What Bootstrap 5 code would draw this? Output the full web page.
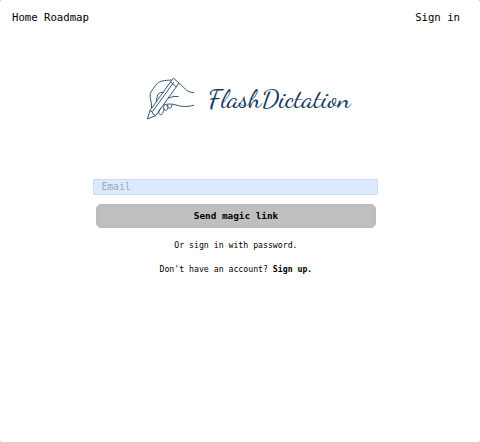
<!DOCTYPE html>
<html lang="en">
<head>
<meta charset="utf-8">
<meta name="viewport" content="width=device-width, initial-scale=1">
<title>FlashDictation</title>
<link href="https://cdn.jsdelivr.net/npm/bootstrap@5.3.0/dist/css/bootstrap.min.css" rel="stylesheet">
<style>
html { background: #b8b8b8; }
body { font-family: "DejaVu Sans Mono", monospace; font-size: 8.2px; line-height: 12px; color: #000; height: 442px; border-radius: 2px; overflow: hidden; }
.topbar { padding: 10px 20px 0 12px; height: 26px; font-size: 10.65px; line-height: 16px; }
.topbar .nav-link { color: #000; }
.topbar .nav-main { gap: 6.4px; }
.brand { margin: 44px 0 0 140px; width: 216px; height: 55px; }
.brand text { font: 400 26.5px "Dancing Script", cursive; fill: #123a63; }
.login { width: 285px; margin: 54px 0 0 93.4px; }
.login .form-control { height: 15.5px; padding: 0 7px; background: #dceaff; border: 1px solid #cbdcf3; border-radius: 1px; font-size: 9.7px; line-height: 13px; }
.login .form-control::placeholder { color: #98a9c2; opacity: 1; }
.login .btn { width: 280px; height: 24px; margin: 9.5px 0 0 2.6px; padding: 0; background: #bfbfbf; border: 1px solid #bababa; border-radius: 5px; color: #000; font-size: 9.35px; line-height: 22px; }
.login p { width: 285px; }
.login a { color: #000; }
.alt { margin-top: 10.5px; }
.join { margin-top: 12px; }
</style>
</head>
<body class="bg-white">
<nav class="topbar d-flex justify-content-between">
  <div class="nav-main d-flex">
    <a class="nav-link p-0" href="#">Home</a>
    <a class="nav-link p-0" href="#">Roadmap</a>
  </div>
  <a class="nav-link p-0" href="#">Sign in</a>
</nav>
<main>
  <svg class="brand d-block" viewBox="0 0 216 55" role="img" aria-label="FlashDictation">
    <g transform="scale(.33333)" fill="none" stroke="#345775" stroke-width="3" stroke-linecap="round" stroke-linejoin="round">
      <path d="M101 25 L117 39 L47 137 L22 147 L30 122 Z"/>
      <path d="M30 122 L36 125 L39 132 L47 137 M38 124 L101 37 M92 36 L108 50"/>
      <path d="M35 113 C36 97 28 83 31 70 C34 62 46 48 52 40 C59 33 75 31 93 30"/>
      <path d="M49 94 L53 74 Q59 66 71 66"/>
      <path d="M117 40 C132 48 136 67 161 68"/>
      <path d="M85 84 Q98 78 115 79"/>
      <path d="M161 106 C145 111 126 111 108 105 C94 101 84 101 72 105"/>
      <path d="M63 114 C55 121 54 132 61 134 C70 136 69 123 73 116 M72 107 C68 117 72 123 79 121 C85 119 85 111 81 106 M83 106 C82 114 89 117 94 112 L96 105"/>
    </g>
    <text x="68" y="36.7" textLength="142.5" lengthAdjust="spacingAndGlyphs">FlashDictation</text>
  </svg>
  <form class="login">
    <input class="form-control shadow-none" type="email" placeholder="Email" aria-label="Email">
    <button class="btn fw-bold d-block" type="button">Send magic link</button>
    <p class="alt text-center mb-0"><a class="text-decoration-none" href="#">Or sign in with password.</a></p>
    <p class="join text-center mb-0">Don't have an account? <a class="fw-bold text-decoration-none" href="#">Sign up.</a></p>
  </form>
</main>
</body>
</html>
